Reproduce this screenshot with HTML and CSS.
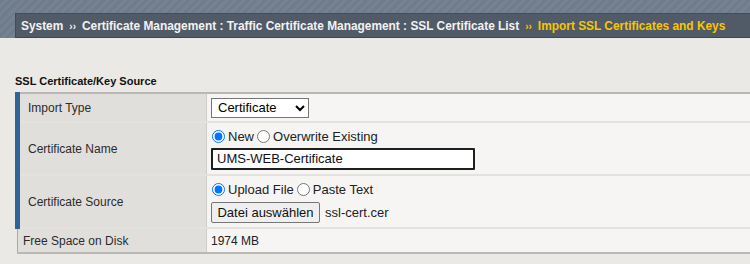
FILE: index.html
```html
<!DOCTYPE html>
<html lang="en">
<head>
    <meta charset="UTF-8">
    <title>Import SSL Certificates and Keys</title>
    <link rel="stylesheet" href="styles.css">
</head>
<body>
    <div class="header">
        <div class="crumbs">
            <span>System</span>
            <span class="sep">&rsaquo;&rsaquo;</span>
            <span>Certificate Management : Traffic Certificate Management : SSL Certificate List</span>
            <span class="sep current">&rsaquo;&rsaquo;</span>
            <span class="current">Import SSL Certificates and Keys</span>
        </div>
    </div>

    <div class="content">
        <h2 class="section-title">SSL Certificate/Key Source</h2>
        <table class="props">
            <tr class="row-import">
                <td class="label required">Import Type</td>
                <td class="value">
                    <select class="select">
                        <option>Certificate</option>
                        <option>Key</option>
                    </select>
                </td>
            </tr>
            <tr class="row-tall">
                <td class="label required">Certificate Name</td>
                <td class="value">
                    <div class="radios">
                        <label><input type="radio" name="mode" checked>New</label>
                        <label><input type="radio" name="mode">Overwrite Existing</label>
                    </div>
                    <input class="text-input" type="text" value="UMS-WEB-Certificate">
                </td>
            </tr>
            <tr class="row-tall">
                <td class="label required">Certificate Source</td>
                <td class="value">
                    <div class="radios">
                        <label><input type="radio" name="source" checked>Upload File</label>
                        <label><input type="radio" name="source">Paste Text</label>
                    </div>
                    <div class="file-row">
                        <button class="file-btn">Datei auswählen</button>
                        <span class="file-name">ssl-cert.cer</span>
                    </div>
                </td>
            </tr>
            <tr class="row-short">
                <td class="label">Free Space on Disk</td>
                <td class="value">1974 MB</td>
            </tr>
        </table>
    </div>
</body>
</html>
```

FILE: styles.css
```css
* {
    margin: 0;
    padding: 0;
    box-sizing: border-box;
}

body {
    background: #ebe9e5;
    font-family: "Liberation Sans", Arial, sans-serif;
    font-size: 12px;
    color: #222;
}

/* Header with breadcrumb */
.header {
    padding: 13px 0 0 15px;
    background: repeating-linear-gradient(135deg, #6f7c8c 0 3px, #76828f 3px 6px);
}

.crumbs {
    height: 25px;
    display: flex;
    align-items: center;
    gap: 6px;
    padding-left: 5px;
    background: #515b67;
    border-top: 1px solid #434b55;
    border-left: 1px solid #434b55;
    border-bottom: 1px solid #3f4650;
    color: #f2f2f2;
    font-weight: bold;
    font-size: 11.9px;
    white-space: nowrap;
}

.crumbs .sep {
    font-size: 10px;
    padding-top: 2px;
}

.crumbs .current {
    color: #f7c600;
}

/* Form section */
.content {
    padding: 37px 0 0 15px;
}

.section-title {
    font-size: 11px;
    font-weight: bold;
    color: #111;
    height: 17px;
}

.props {
    width: 100%;
    border-collapse: collapse;
    border-top: 2px solid #b9b8b5;
    border-bottom: 2px solid #b9b8b5;
}

.props td {
    border-bottom: 2px solid #e4e2df;
}

.props tr:last-child td {
    border-bottom: none;
}

.label {
    width: 189px;
    background: #e1dfdb;
    border-right: 1px solid #cfcdc9;
    border-left: 1px solid #a9a8a5;
    padding-left: 5px;
    color: #2b2b2b;
}

.label.required {
    border-left: 5px solid #2f6496;
    padding-left: 8px;
}

.value {
    background: #f6f5f3;
    padding-left: 4px;
}

.row-import td {
    height: 29px;
}

.row-tall td {
    height: 53px;
}

.row-short td {
    height: 25px;
}

.select {
    width: 98px;
    height: 20px;
    font-family: "Liberation Sans", Arial, sans-serif;
    font-size: 13px;
    border: 1px solid #767676;
    border-radius: 0;
    background: #fff;
    padding-left: 2px;
}

.radios {
    display: flex;
    align-items: center;
    gap: 2px;
    height: 18px;
    font-size: 13px;
}

.radios label {
    display: flex;
    align-items: center;
}

.radios input {
    margin: 0 3px 0 1px;
    width: 13px;
    height: 13px;
}

.text-input {
    width: 264px;
    height: 22px;
    border: 2px solid #1f1f1f;
    border-radius: 1px;
    padding-left: 4px;
    font-family: "Liberation Sans", Arial, sans-serif;
    font-size: 13px;
    color: #111;
    margin-top: 2px;
}

.file-row {
    display: flex;
    align-items: center;
    gap: 5px;
    margin-top: 3px;
}

.file-btn {
    height: 21px;
    width: 109px;
    font-family: "Liberation Sans", Arial, sans-serif;
    font-size: 13px;
    color: #111;
    background: #efefef;
    border: 1px solid #767676;
    border-radius: 2px;
}

.file-name {
    font-size: 13px;
}
```
